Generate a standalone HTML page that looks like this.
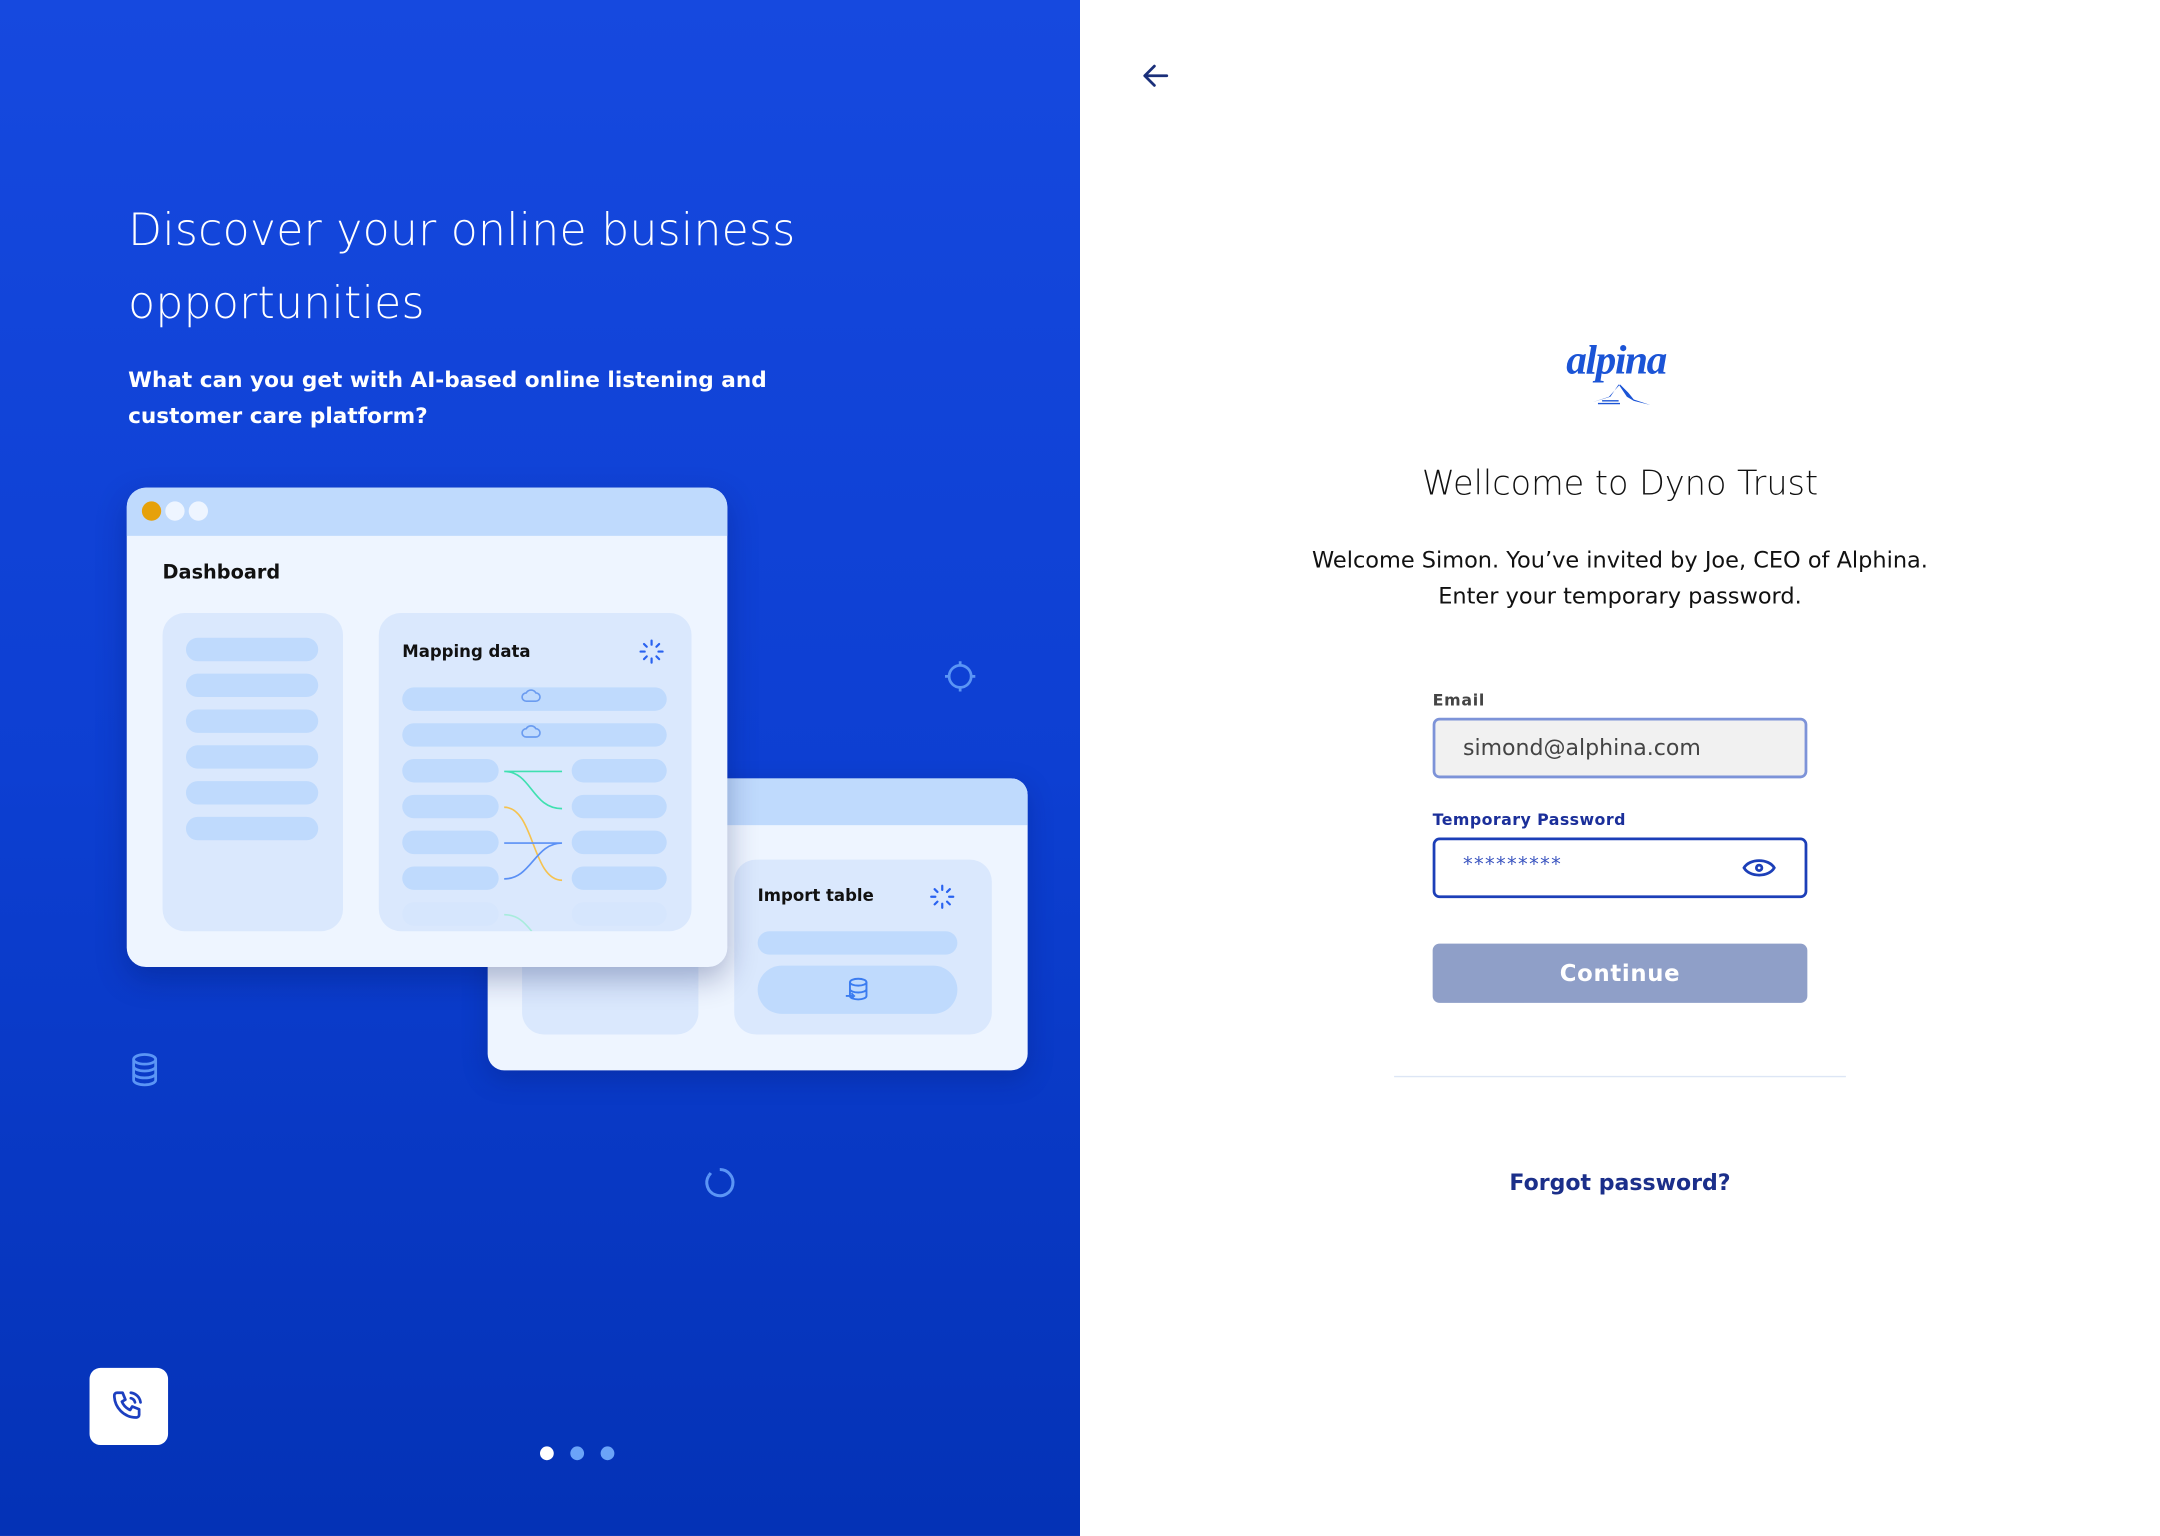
<!DOCTYPE html>
<html><head><meta charset="utf-8"><style>
html,body{margin:0;padding:0;width:2160px;height:1536px;overflow:hidden;background:#fff}
#s{position:absolute;left:0;top:0;width:1568px;height:1115px;transform:scale(1.37755);transform-origin:0 0;font-family:"Liberation Sans","DejaVu Sans",sans-serif}
.abs{position:absolute}
#left{left:0;top:0;width:784px;height:1115px;background:linear-gradient(180deg,#1649df 0%,#0d3fd2 50%,#0432b6 100%)}
.bar{position:absolute;background:#bfdafd;border-radius:10px;height:17px}
.fb{position:absolute;background:#d6e6fd;border-radius:10px;height:17px}
</style></head><body><div id="s">
<div id="left" class="abs">
 <div class="abs" style="left:93px;top:141px;color:#fff;font-size:32px;line-height:53px;font-weight:300;font-family:'DejaVu Sans',sans-serif;letter-spacing:0.2px">Discover your online business<br>opportunities</div>
 <div class="abs" style="left:93px;top:263px;color:#fff;font-size:15.7px;line-height:26px;font-weight:bold;font-family:'DejaVu Sans',sans-serif">What can you get with AI-based online listening and<br>customer care platform?</div>

 <div class="abs" style="left:354px;top:565px;width:392px;height:212px;background:#eef5ff;border-radius:12px;box-shadow:0 6px 18px rgba(0,20,90,.25);overflow:hidden">
  <div class="abs" style="left:0;top:0;width:392px;height:34px;background:#bfdafd"></div>
  <div class="abs" style="left:25px;top:120px;width:128px;height:66px;background:#dae8fd;border-radius:16px"></div>
  <div class="abs" style="left:179px;top:59px;width:187px;height:127px;background:#dae8fd;border-radius:16px">
   <div class="abs" style="left:17px;top:19px;font-size:12px;font-weight:bold;color:#111;font-family:'DejaVu Sans',sans-serif">Import table</div>
   <svg class="abs" style="left:142px;top:18px" width="18" height="18" viewBox="0 0 18 18" stroke="#2962f0" stroke-width="1.6" stroke-linecap="round"><path d="M9 1v3M9 14v3M1 9h3M14 9h3M3.5 3.5l2 2M12.5 12.5l2 2M3.5 14.5l2-2M12.5 5.5l2-2"/></svg>
   <div class="bar" style="left:17px;top:52px;width:145px"></div>
   <div class="bar" style="left:17px;top:77px;width:145px;height:35px;border-radius:18px"></div>
   <svg class="abs" style="left:80px;top:85px" width="18" height="20" viewBox="0 0 18 20" fill="none" stroke="#3b7cf0" stroke-width="1.4"><ellipse cx="10" cy="4" rx="6" ry="2.5"/><path d="M4 4v10c0 1.4 2.7 2.5 6 2.5s6-1.1 6-2.5V4M4 9c0 1.4 2.7 2.5 6 2.5s6-1.1 6-2.5"/><path d="M1 14h6M5 12l2 2-2 2"/></svg>
  </div>
 </div>

 <div class="abs" style="left:92px;top:354px;width:436px;height:348px;background:#eef5ff;border-radius:14px;box-shadow:0 8px 22px rgba(0,20,90,.3);overflow:hidden">
  <div class="abs" style="left:0;top:0;width:436px;height:35px;background:#bfdafd"></div>
  <div class="abs" style="left:11px;top:10px;width:14px;height:14px;border-radius:50%;background:#e6a10a"></div>
  <div class="abs" style="left:28px;top:10px;width:14px;height:14px;border-radius:50%;background:#eef5ff"></div>
  <div class="abs" style="left:45px;top:10px;width:14px;height:14px;border-radius:50%;background:#eef5ff"></div>
  <div class="abs" style="left:26px;top:54px;font-size:14px;font-weight:bold;color:#111;font-family:'DejaVu Sans',sans-serif">Dashboard</div>
  <div class="abs" style="left:26px;top:91px;width:131px;height:231px;background:#dae8fd;border-radius:16px">
   <div class="bar" style="left:17px;top:18px;width:96px"></div>
   <div class="bar" style="left:17px;top:44px;width:96px"></div>
   <div class="bar" style="left:17px;top:70px;width:96px"></div>
   <div class="bar" style="left:17px;top:96px;width:96px"></div>
   <div class="bar" style="left:17px;top:122px;width:96px"></div>
   <div class="bar" style="left:17px;top:148px;width:96px"></div>
  </div>
  <div class="abs" style="left:183px;top:91px;width:227px;height:231px;background:#dae8fd;border-radius:16px;overflow:hidden">
   <div class="abs" style="left:17px;top:21px;font-size:12px;font-weight:bold;color:#111;font-family:'DejaVu Sans',sans-serif">Mapping data</div>
   <svg class="abs" style="left:189px;top:19px" width="18" height="18" viewBox="0 0 18 18" stroke="#2962f0" stroke-width="1.6" stroke-linecap="round"><path d="M9 1v3M9 14v3M1 9h3M14 9h3M3.5 3.5l2 2M12.5 12.5l2 2M3.5 14.5l2-2M12.5 5.5l2-2"/></svg>
   <div class="bar" style="left:17px;top:54px;width:192px"></div>
   <div class="bar" style="left:17px;top:80px;width:192px"></div>
   <div class="bar" style="left:17px;top:106px;width:70px"></div><div class="bar" style="left:140px;top:106px;width:69px"></div>
   <div class="bar" style="left:17px;top:132px;width:70px"></div><div class="bar" style="left:140px;top:132px;width:69px"></div>
   <div class="bar" style="left:17px;top:158px;width:70px"></div><div class="bar" style="left:140px;top:158px;width:69px"></div>
   <div class="bar" style="left:17px;top:184px;width:70px"></div><div class="bar" style="left:140px;top:184px;width:69px"></div>
   <div class="fb" style="left:17px;top:210px;width:70px"></div><div class="fb" style="left:140px;top:210px;width:69px"></div>
   <svg class="abs" style="left:0;top:0" width="227" height="231" fill="none" stroke-width="1.2">
    <path d="M107 58a4 4 0 0 1 7 0a3 3 0 0 1 0 6h-7a3 3 0 0 1 0-6z" stroke="#6b9cf0"/>
    <path d="M107 84a4 4 0 0 1 7 0a3 3 0 0 1 0 6h-7a3 3 0 0 1 0-6z" stroke="#6b9cf0"/>
    <path d="M91 115h42M91 115c20 0 20 27 42 27" stroke="#3fe0b0"/>
    <path d="M91 141c22 0 20 53 42 53" stroke="#f5c24f"/>
    <path d="M91 167h42M91 193c20 0 22-26 42-26" stroke="#5a90f5"/>
    <path d="M91 219c10 0 15 6 20 12" stroke="#a8ecdc"/>
   </svg>
  </div>
 </div>

 <svg class="abs" style="left:684px;top:478px" width="26" height="26" viewBox="0 0 26 26" fill="none" stroke="#5b95f5" stroke-width="2"><circle cx="13" cy="13" r="8"/><path d="M13 2v3M13 21v3M2 13h3M21 13h3"/></svg>
 <svg class="abs" style="left:94px;top:764px" width="22" height="26" viewBox="0 0 22 26" fill="none" stroke="#5b95f5" stroke-width="2"><ellipse cx="11" cy="5" rx="8" ry="3.5"/><path d="M3 5v15c0 2 3.6 3.5 8 3.5s8-1.5 8-3.5V5M3 10c0 2 3.6 3.5 8 3.5s8-1.5 8-3.5M3 15c0 2 3.6 3.5 8 3.5s8-1.5 8-3.5"/></svg>
 <svg class="abs" style="left:510px;top:846px" width="25" height="25" viewBox="0 0 25 25" fill="none" stroke="#5b95f5" stroke-width="2.2"><path d="M12.5 3a9.5 9.5 0 1 1-8 4.5"/><path d="M6 5.5l-1.5 2"/></svg>

 <div class="abs" style="left:65px;top:993px;width:57px;height:56px;background:#fff;border-radius:8px"></div>
 <svg class="abs" style="left:80px;top:1008px" width="26" height="26" viewBox="0 0 26 26" fill="none" stroke="#1c3fc0" stroke-width="2" stroke-linecap="round" stroke-linejoin="round"><path d="M5 3h4l2 5-2.5 1.5a11 11 0 0 0 6 6L16 13l5 2v4a2 2 0 0 1-2 2A16 16 0 0 1 3 5a2 2 0 0 1 2-2z"/><path d="M15 3a8 8 0 0 1 7 7M15 7a4 4 0 0 1 3 3"/></svg>

 <div class="abs" style="left:392px;top:1050px;width:10px;height:10px;border-radius:50%;background:#fff"></div>
 <div class="abs" style="left:414px;top:1050px;width:10px;height:10px;border-radius:50%;background:#6ba4f8"></div>
 <div class="abs" style="left:436px;top:1050px;width:10px;height:10px;border-radius:50%;background:#6ba4f8"></div>
</div>

<svg class="abs" style="left:827px;top:43px" width="24" height="24" viewBox="0 0 24 24" fill="none" stroke="#1a2f7a" stroke-width="2" stroke-linecap="round" stroke-linejoin="round"><path d="M20 12H5M11 5l-7 7 7 7"/></svg>
<div class="abs" style="left:1137px;top:245px;font-family:'Liberation Serif',serif;font-style:italic;font-weight:bold;font-size:30px;color:#1b54d6;letter-spacing:-1px">alpina</div>
<svg class="abs" style="left:1154px;top:272px" width="46" height="24" viewBox="0 0 46 24"><path d="M2 20l12-4 8-9 6 6 4 5 12 4-12-3-5-3-6-9-6 9z" fill="#1b54d6"/><path d="M6 21h16M9 19h12" stroke="#1b54d6"/></svg>
<div class="abs" style="left:900px;top:336px;width:552px;text-align:center;font-size:24.3px;color:#111;font-family:'DejaVu Sans',sans-serif;font-weight:300">Wellcome to Dyno Trust</div>
<div class="abs" style="left:900px;top:394px;width:552px;text-align:center;font-size:16.3px;line-height:26px;color:#111;font-family:'DejaVu Sans',sans-serif">Welcome Simon. You’ve invited by Joe, CEO of Alphina.<br>Enter your temporary password.</div>
<div class="abs" style="left:1040px;top:501px;font-size:11.5px;font-weight:bold;color:#444;font-family:'DejaVu Sans',sans-serif;letter-spacing:.5px">Email</div>
<div class="abs" style="left:1040px;top:521px;width:268px;height:40px;border:2px solid #7d93d8;border-radius:5px;background:#f1f1f1"></div>
<div class="abs" style="left:1062px;top:533px;font-size:16px;color:#444;font-family:'DejaVu Sans',sans-serif">simond@alphina.com</div>
<div class="abs" style="left:1040px;top:588px;font-size:11.5px;font-weight:bold;color:#1b2f9a;font-family:'DejaVu Sans',sans-serif;letter-spacing:.3px">Temporary Password</div>
<div class="abs" style="left:1040px;top:608px;width:268px;height:40px;border:2px solid #1c3fb8;border-radius:5px;background:#fff"></div>
<div class="abs" style="left:1062px;top:620px;font-size:14px;color:#3b55c0;letter-spacing:1px;font-family:'DejaVu Sans',sans-serif">*********</div>
<svg class="abs" style="left:1264px;top:620px" width="26" height="20" viewBox="0 0 26 20" fill="none" stroke="#1c3fb8" stroke-width="2"><path d="M2 10C6 3 20 3 24 10C20 17 6 17 2 10z"/><circle cx="13" cy="10" r="2"/></svg>
<div class="abs" style="left:1040px;top:685px;width:272px;height:43px;background:#8f9fc8;border-radius:5px;color:#fff;text-align:center;line-height:43px;font-size:16.5px;font-weight:bold;font-family:'DejaVu Sans',sans-serif;letter-spacing:.5px">Continue</div>
<div class="abs" style="left:1012px;top:781px;width:328px;height:1px;background:#dde6f5"></div>
<div class="abs" style="left:900px;top:849px;width:552px;text-align:center;font-size:16px;font-weight:bold;color:#1b2f8a;font-family:'DejaVu Sans',sans-serif">Forgot password?</div>
</div></body></html>
